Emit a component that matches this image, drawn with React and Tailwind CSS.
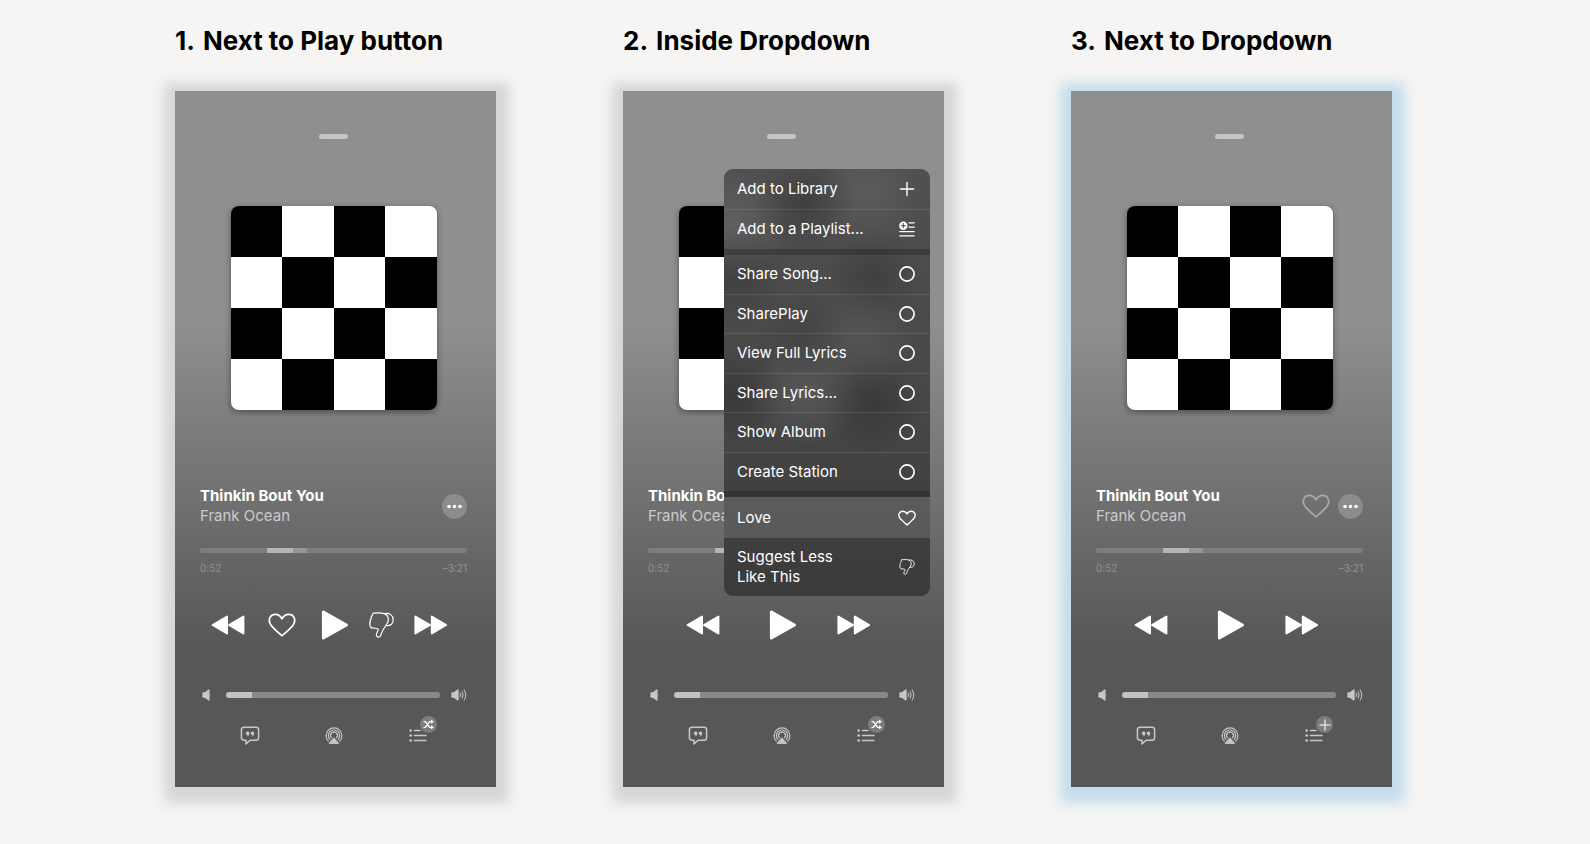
// App.jsx
import React from 'react';

const RewindIcon = () => (
  <svg className="w-[34px] h-[20px]" viewBox="0 0 34 20" fill="#fff" stroke="#fff" strokeWidth="2" strokeLinejoin="round">
    <path d="M16 1.6V18.4L1.6 10z" />
    <path d="M32.4 1.6V18.4L18 10z" />
  </svg>
);

const ForwardIcon = () => (
  <svg className="w-[34px] h-[20px]" viewBox="0 0 34 20" fill="#fff" stroke="#fff" strokeWidth="2" strokeLinejoin="round">
    <path d="M1.4 1.6V18.4L16 10z" />
    <path d="M17.8 1.6V18.4L32.2 10z" />
  </svg>
);

const PlayIcon = () => (
  <svg className="w-[30px] h-[30px]" viewBox="0 0 30 30" fill="#fff" stroke="#fff" strokeWidth="3" strokeLinejoin="round">
    <path d="M4.4 2V28L27.4 15z" />
  </svg>
);

const HeartIcon = ({ className, stroke = 1.8 }) => (
  <svg className={className} viewBox="0 0 28 24" fill="none" stroke="currentColor" strokeWidth={stroke} strokeLinejoin="round">
    <path d="M14 22.8C11.5 20.6 5.6 15.6 3 12.2C-0.6 7.4 2 1.4 7.2 1.4C10.4 1.4 12.6 3.2 14 5.8C15.4 3.2 17.6 1.4 20.8 1.4C26 1.4 28.6 7.4 25 12.2C22.4 15.6 16.5 20.6 14 22.8Z" />
  </svg>
);

const ThumbsDownIcon = ({ className, stroke = 1.2 }) => (
  <svg className={className} viewBox="0 0 25 26" fill="none" stroke="currentColor" strokeWidth={stroke} strokeLinejoin="round" strokeLinecap="round">
    <path d="M4.4 1.2C8 0.8 12 0.7 14.4 1.4C18.2 2.4 19.6 5 19.2 8.6C18.8 12 16 14.2 14.4 17.2C13 19.6 12.4 21.8 11.4 24C10.6 25.6 7.8 25.4 7.4 23.4C7 21.2 9.2 19 9.2 17.4C9 15.9 7.2 16.4 4.4 16.2C2 16 0.8 14.8 1.1 13C0.5 12 0.6 10.6 1.5 10C0.9 8.8 1.1 7.4 2.3 6.8C1.8 5.4 2.2 4.2 3.3 3.8C3 2.6 3.4 1.6 4.4 1.2Z" />
    <path d="M15.8 1.6C20.4 0.6 24 3.4 24.2 7.4C24.4 11.4 22 14.4 17 13.4" />
  </svg>
);

const DotsIcon = () => (
  <svg className="w-[15px] h-[5px]" viewBox="0 0 15 5" fill="#fff">
    <circle cx="2" cy="2.5" r="1.8" />
    <circle cx="7.5" cy="2.5" r="1.8" />
    <circle cx="13" cy="2.5" r="1.8" />
  </svg>
);

const SpeakerIcon = () => (
  <svg className="w-2 h-3" viewBox="0 0 8 12" fill="#c8c8c8">
    <path d="M0.4 3.9Q0.4 3.3 1 3.3H2.8L6.6 0.4Q7.6 0 7.6 1V11Q7.6 12 6.6 11.6L2.8 8.7H1Q0.4 8.7 0.4 8.1z" />
  </svg>
);

const SpeakerLoudIcon = () => (
  <svg className="w-4 h-3" viewBox="0 0 16 12" fill="none" stroke="#c8c8c8" strokeWidth="1" strokeLinecap="round">
    <path d="M0.4 3.9Q0.4 3.3 1 3.3H2.8L6.6 0.4Q7.6 0 7.6 1V11Q7.6 12 6.6 11.6L2.8 8.7H1Q0.4 8.7 0.4 8.1z" fill="#c8c8c8" stroke="none" />
    <path d="M9.2 4.2Q10.2 6 9.2 7.8" />
    <path d="M11.2 2.6Q13.2 6 11.2 9.4" />
    <path d="M13.3 1Q16.3 6 13.3 11" />
  </svg>
);

const LyricsIcon = () => (
  <svg className="w-5 h-5" viewBox="0 0 20 20" fill="none" stroke="#c8c8c8" strokeWidth="1.5" strokeLinejoin="round">
    <path d="M4 1.2H16Q18.6 1.2 18.6 3.8V11.4Q18.6 14.2 16 14.2H10L6 18V14.2H4Q1.4 14.2 1.4 11.6V3.8Q1.4 1.2 4 1.2z" />
    <path d="M9.4 7.1A1.8 1.8 0 1 0 7.6 9Q7.8 9.9 6.7 10.4Q9.4 10.2 9.4 7.1zM14.2 7.1A1.8 1.8 0 1 0 12.4 9Q12.6 9.9 11.5 10.4Q14.2 10.2 14.2 7.1z" fill="#c8c8c8" stroke="none" />
  </svg>
);

const AirplayIcon = () => (
  <svg className="w-5 h-5" viewBox="0 0 20 20" fill="none" stroke="#c8c8c8" strokeWidth="1.2" strokeLinecap="round">
    <path d="M4.3 15.2A7.9 7.9 0 1 1 15.7 15.2" />
    <path d="M5.8 13.3A5.6 5.6 0 1 1 14.2 13.3" />
    <path d="M7.3 11.6A3.4 3.4 0 1 1 12.7 11.6" />
    <path d="M10 12L14.6 17.4H5.4z" fill="#c8c8c8" strokeLinejoin="round" strokeWidth="1" />
  </svg>
);

const QueueIcon = () => (
  <svg className="w-5 h-5" viewBox="0 0 20 20" fill="none" stroke="#c8c8c8" strokeWidth="1.6" strokeLinecap="round">
    <path d="M6.4 4.5H12M6.4 9.5H18M6.4 14.5H18" />
    <path d="M2.6 4.5H2.7M2.6 9.5H2.7M2.6 14.5H2.7" strokeWidth="2.6" />
  </svg>
);

const ShuffleIcon = () => (
  <svg className="w-[11px] h-[11px]" viewBox="0 0 11 11" fill="none" stroke="#fff" strokeWidth="1.3">
    <path d="M0.5 2.7H2.4L6.6 8.3H8.4M0.5 8.3H2.4L6.6 2.7H8.4" />
    <path d="M8 0.6L10.9 2.7L8 4.8zM8 6.2L10.9 8.3L8 10.4z" fill="#fff" stroke="none" />
  </svg>
);

const PlusIcon = ({ className, stroke = 1.4 }) => (
  <svg className={className} viewBox="0 0 16 16" fill="none" stroke="currentColor" strokeWidth={stroke} strokeLinecap="round">
    <path d="M8 1.4V14.6M1.4 8H14.6" />
  </svg>
);

const PlaylistIcon = () => (
  <svg className="w-4 h-4" viewBox="0 0 16 16" fill="none" stroke="#fff" strokeWidth="1.3" strokeLinecap="round">
    <circle cx="4.3" cy="4.7" r="4.2" fill="#fff" stroke="none" />
    <path d="M4.3 2.6V6.8M2.2 4.7H6.4" stroke="#4a4a4a" strokeWidth="1.1" />
    <path d="M10 1.8H15.2M10 6.2H15.2M0.8 10.6H15.2M0.8 14.8H15.2" />
  </svg>
);

const CircleIcon = () => (
  <svg className="w-4 h-4" viewBox="0 0 16 16" fill="none" stroke="#fff" strokeWidth="1.7">
    <circle cx="8" cy="8" r="7.1" />
  </svg>
);

const menuGroups = [
  {
    height: 'h-[86px]',
    items: [
      { label: 'Add to Library', icon: <PlusIcon className="w-4 h-4" /> },
      { label: 'Add to a Playlist...', icon: <PlaylistIcon /> },
    ],
  },
  {
    height: 'h-[242px]',
    items: [
      { label: 'Share Song...', icon: <CircleIcon /> },
      { label: 'SharePlay', icon: <CircleIcon /> },
      { label: 'View Full Lyrics', icon: <CircleIcon /> },
      { label: 'Share Lyrics...', icon: <CircleIcon /> },
      { label: 'Show Album', icon: <CircleIcon /> },
      { label: 'Create Station', icon: <CircleIcon /> },
    ],
  },
];

const menuBackground =
  'bg-[radial-gradient(circle_at_82px_32px,#00000030,transparent_50px),radial-gradient(circle_at_149px_108px,#00000028,transparent_50px),radial-gradient(circle_at_12px_108px,#00000028,transparent_50px),radial-gradient(circle_at_9px_225px,#00000030,transparent_50px),radial-gradient(circle_at_149px_235px,#00000030,transparent_50px),radial-gradient(circle_at_82px_165px,#00000014,transparent_45px),radial-gradient(circle_at_9px_55px,#ffffff1a,transparent_55px),radial-gradient(circle_at_142px_25px,#ffffff12,transparent_55px),radial-gradient(circle_at_136px_168px,#ffffff10,transparent_55px),radial-gradient(circle_at_82px_225px,#ffffff16,transparent_55px),linear-gradient(#505050,#474747_55%,#414141_75%,#3b3b3b)]';

const Menu = () => (
  <div className={`absolute top-[78px] left-[101px] w-[206px] rounded-[9px] overflow-hidden text-[15px] leading-5 text-white ${menuBackground}`}>
    {menuGroups.map((group, i) => (
      <div key={i} className={`flex flex-col border-b-[6px] border-black/20 divide-y divide-white/10 ${group.height}`}>
        {group.items.map((item) => (
          <button key={item.label} className="w-full flex-1 pl-[13px] pr-[15px] flex items-center justify-between text-left">
            {item.label}
            {item.icon}
          </button>
        ))}
      </div>
    ))}
    <button className="w-full h-[41px] pl-[13px] pr-[14px] flex items-center justify-between text-left bg-white/14">
      Love
      <HeartIcon className="w-[18px] h-4" stroke={2.2} />
    </button>
    <button className="w-full h-[58px] pl-[13px] pr-[15px] flex items-center justify-between text-left">
      <span>Suggest Less<br />Like This</span>
      <ThumbsDownIcon className="w-4 h-4" stroke={1.5} />
    </button>
  </div>
);

const Artwork = () => (
  <div className="mx-auto w-[206px] h-[204px] grid grid-cols-4 grid-rows-4 rounded-lg overflow-hidden shadow-[0_2px_6px_rgba(0,0,0,0.4)]">
    {Array.from({ length: 16 }, (_, i) => (
      <div key={i} className={(Math.floor(i / 4) + i) % 2 === 0 ? 'bg-black' : 'bg-white'} />
    ))}
  </div>
);

const Player = ({ glow, rating, love, badge, children }) => (
  <div className={`relative w-[321px] pb-[41px] pl-[25px] pr-[29px] bg-[linear-gradient(#8f8f8f_33%,#575757_80%)] ${glow}`}>
    <div className="pt-[43px]">
      <div className="mx-auto w-[29px] h-[5px] rounded-full bg-[#c5c5c5]" />
    </div>
    <div className="pt-[67px]">
      <Artwork />
    </div>

    {/* Track */}
    <div className="mt-[76px] h-[40px] flex items-center justify-between">
      <div className="text-[15px] leading-5">
        <div className="font-bold text-white">Thinkin Bout You</div>
        <div className="text-[#cbcbcb]">Frank Ocean</div>
      </div>
      <div className="flex items-center gap-2">
        {love && (
          <button aria-label="Love" className="text-[#a8a8a8]">
            <HeartIcon className="w-[28px] h-6" />
          </button>
        )}
        <button aria-label="More" className="w-[25px] h-[25px] rounded-full bg-[#8c8c8c] flex items-center justify-center">
          <DotsIcon />
        </button>
      </div>
    </div>

    {/* Progress */}
    <input
      type="range"
      aria-label="Progress"
      defaultValue={35}
      className="block mt-[22px] w-full h-[5px] rounded-full appearance-none bg-[linear-gradient(90deg,#7d7d7d_25%,#b5b5b5_25%,#b5b5b5_35%,#969696_35%,#969696_40%,#7d7d7d_40%)] [&::-webkit-slider-thumb]:appearance-none"
    />
    <div className="mt-[9px] flex justify-between text-[10px] leading-3 text-[#929292]">
      <span>0:52</span>
      <span>–3:21</span>
    </div>

    {/* Playback */}
    <div className={`mt-9 h-[30px] flex items-center ${rating ? 'pl-[11px] gap-5' : 'pl-[38px] gap-10'}`}>
      <button aria-label="Rewind"><RewindIcon /></button>
      {rating && (
        <button aria-label="Love" className="w-[34px] flex justify-center text-white">
          <HeartIcon className="w-[28px] h-6" />
        </button>
      )}
      <button aria-label="Play" className={rating ? '' : 'pl-[7px]'}><PlayIcon /></button>
      {rating && (
        <button aria-label="Suggest Less" className="text-white">
          <ThumbsDownIcon className="w-[25px] h-[26px]" />
        </button>
      )}
      <button aria-label="Forward"><ForwardIcon /></button>
    </div>

    {/* Volume */}
    <div className="mt-[49px] pl-[2px] flex items-center">
      <SpeakerIcon />
      <input
        type="range"
        aria-label="Volume"
        defaultValue={12}
        className="block ml-4 flex-1 min-w-0 mr-[11px] h-[6px] rounded-full appearance-none bg-[linear-gradient(90deg,#c2c2c2_12%,#888_12%)] [&::-webkit-slider-thumb]:appearance-none"
      />
      <SpeakerLoudIcon />
    </div>

    <div className="mt-[25px] pl-10 pr-[39px] flex items-center justify-between">
      <button aria-label="Lyrics"><LyricsIcon /></button>
      <button aria-label="AirPlay"><AirplayIcon /></button>
      <button aria-label="Queue" className="relative">
        <QueueIcon />
        <span className="absolute -top-[10px] left-[12px] w-[17px] h-[17px] rounded-full bg-[#7d7d7d] flex items-center justify-center text-[#ddd]">
          {badge}
        </span>
      </button>
    </div>
    {children}
  </div>
);

const Option = ({ number, title, children }) => (
  <section>
    <h2 className="h-[91px] pt-[23px] flex gap-2 text-[26px] leading-9 font-bold text-black whitespace-nowrap">
      <span>{number}.</span>
      <span>{title}</span>
    </h2>
    {children}
  </section>
);

const grayGlow = 'shadow-[1px_4px_12px_12px_#d5d5d4]';
const blueGlow = 'shadow-[1px_4px_12px_12px_#c3dcec]';

const App = () => {
  return (
    <main className="min-h-screen bg-[#f6f5f3] pl-[175px] pr-[198px] flex items-start justify-between font-['Inter',sans-serif]">
      <Option number={1} title="Next to Play button">
        <Player glow={grayGlow} rating badge={<ShuffleIcon />} />
      </Option>
      <Option number={2} title="Inside Dropdown">
        <Player glow={grayGlow} badge={<ShuffleIcon />}>
          <Menu />
        </Player>
      </Option>
      <Option number={3} title="Next to Dropdown">
        <Player glow={blueGlow} love badge={<PlusIcon className="w-3 h-3" stroke={2} />} />
      </Option>
    </main>
  );
};

export default App;
